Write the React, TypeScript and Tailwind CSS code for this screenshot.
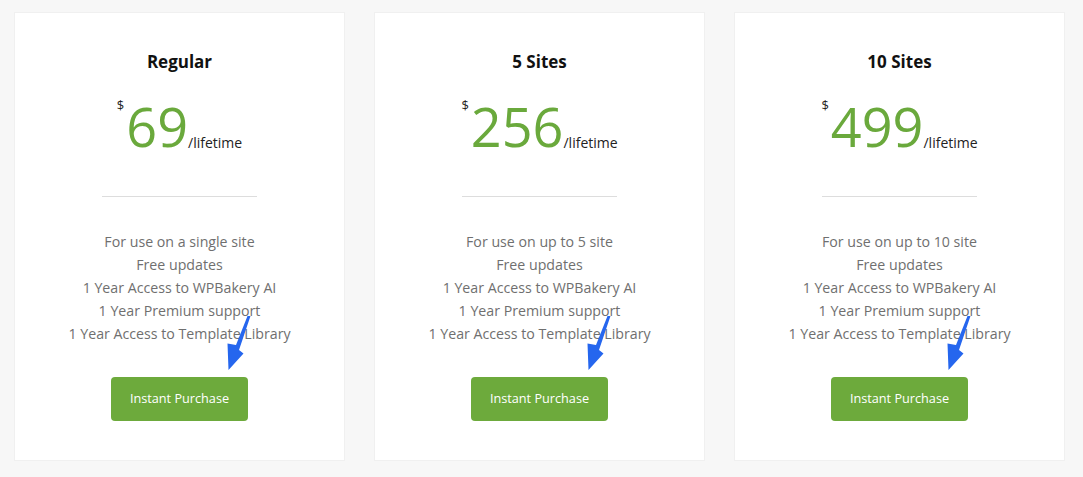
import React from 'react';

type Plan = {
  name: string;
  price: string;
  features: string[];
};

const plans: Plan[] = [
  {
    name: 'Regular',
    price: '69',
    features: [
      'For use on a single site',
      'Free updates',
      '1 Year Access to WPBakery AI',
      '1 Year Premium support',
      '1 Year Access to Template Library',
    ],
  },
  {
    name: '5 Sites',
    price: '256',
    features: [
      'For use on up to 5 site',
      'Free updates',
      '1 Year Access to WPBakery AI',
      '1 Year Premium support',
      '1 Year Access to Template Library',
    ],
  },
  {
    name: '10 Sites',
    price: '499',
    features: [
      'For use on up to 10 site',
      'Free updates',
      '1 Year Access to WPBakery AI',
      '1 Year Premium support',
      '1 Year Access to Template Library',
    ],
  },
];

// hand-drawn pointer arrow that sits over the last feature line
function PointerArrow() {
  return (
    <svg
      className="absolute left-[208px] top-[302px] pointer-events-none"
      width="30"
      height="58"
      viewBox="0 0 30 58"
    >
      <polygon
        points="27.5,1 24.5,1 13,30 4.5,28.5 5.5,55 20.5,38.5 16,35"
        fill="#2566ee"
      />
    </svg>
  );
}

function PlanCard({ plan }: { plan: Plan }) {
  return (
    <div className="relative w-[331px] h-[449px] bg-white border border-[#f0f0f0] flex flex-col items-center pt-[37px]">
      <h3 className="text-[17px] leading-[24px] font-bold text-[#111]">{plan.name}</h3>

      {/* price */}
      <div className="flex items-start mt-[24px] h-[56px]">
        <span className="text-[13px] leading-none text-[#222] mt-[1px] mr-[2px]">$</span>
        <span className="text-[54px] leading-[56px] text-[#6aa93c]">{plan.price}</span>
        <span className="text-[14px] leading-none text-[#222] self-end mb-[4px]">/lifetime</span>
      </div>

      <div className="w-[155px] h-px bg-[#dddddd] mt-[42px]" />

      <ul className="mt-[33px] text-[14.2px] leading-[23px] text-[#6f6f6f] text-center">
        {plan.features.map((f) => (
          <li key={f}>{f}</li>
        ))}
      </ul>

      <button className="mt-[32px] w-[137px] h-[44px] rounded-[4px] bg-[#6daa3c] text-white text-[12.7px]">
        Instant Purchase
      </button>

      <PointerArrow />
    </div>
  );
}

export default function App() {
  return (
    <div
      className="w-[1083px] h-[477px] bg-[#f7f7f7] flex gap-[29px] pl-[14px] pt-[12px]"
      style={{ fontFamily: '"Open Sans", "Noto Sans", sans-serif' }}
    >
      {plans.map((p) => (
        <PlanCard key={p.name} plan={p} />
      ))}
    </div>
  );
}
